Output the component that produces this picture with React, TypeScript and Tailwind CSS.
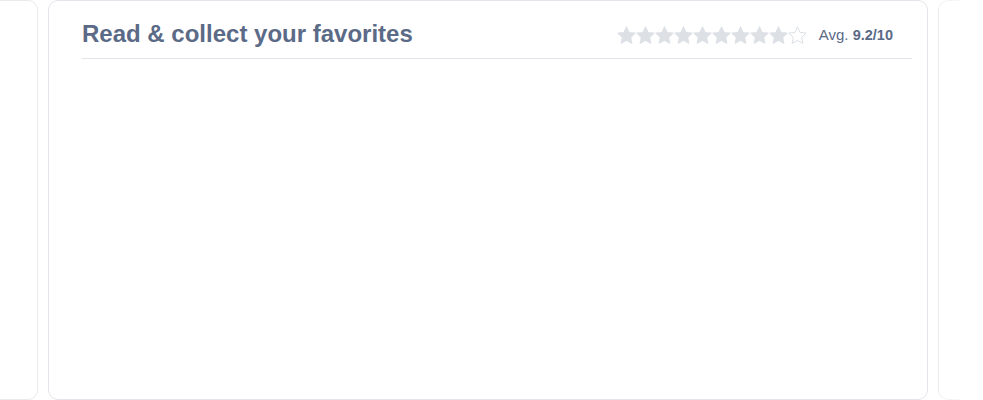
import React from 'react';

const STAR = "12,2.5 14.9,8.6 21.5,9.4 16.6,14 17.9,20.6 12,17.4 6.1,20.6 7.4,14 2.5,9.4 9.1,8.6";

function Star({ filled }: { filled: boolean }) {
  return (
    <svg viewBox="1.5 1.5 21 21" className="w-[19px] h-[19px] block">
      {filled ? (
        <polygon points={STAR} fill="#dde1e6" stroke="#dde1e6" strokeWidth="1.2" strokeLinejoin="round" />
      ) : (
        <polygon points={STAR} fill="none" stroke="#d3d8de" strokeWidth="0.9" strokeLinejoin="round" />
      )}
    </svg>
  );
}

export default function App() {
  const score = 9.2;
  const filled = Math.floor(score);

  return (
    <div className="w-[983px] h-[400px] overflow-hidden bg-white" style={{ fontFamily: '"Liberation Sans", Arial, sans-serif' }}>
      <div className="flex gap-[10px] -ml-[842px]">
        {/* previous slide */}
        <div className="w-[880px] h-[400px] shrink-0 rounded-[10px] border border-[#e8eaed] bg-white" />

        {/* current slide */}
        <div className="w-[880px] h-[400px] shrink-0 rounded-[10px] border border-[#e2e5e9] bg-white pt-[19px] pl-[33px] pr-[15px]">
          <div className="flex items-center justify-between border-b border-[#e1e4e9] pb-[10px]">
            <h2 className="text-[24px] leading-[28px] font-bold text-[#5b6a86]">Read &amp; collect your favorites</h2>
            <div className="flex items-center mr-[19px] mt-[3px]">
              <div className="flex">
                {Array.from({ length: 10 }).map((_, i) => (
                  <Star key={i} filled={i < filled} />
                ))}
              </div>
              <p className="ml-[12px] text-[15px] text-[#5b6a86]">
                Avg. <span className="font-bold text-[14.5px]">{score}/10</span>
              </p>
            </div>
          </div>
        </div>

        {/* next slide, fading out */}
        <div className="w-[880px] h-[400px] shrink-0 rounded-[10px] border border-[#e8eaed] bg-white [mask-image:linear-gradient(to_right,black_0px,transparent_28px)]" />
      </div>
    </div>
  );
}
